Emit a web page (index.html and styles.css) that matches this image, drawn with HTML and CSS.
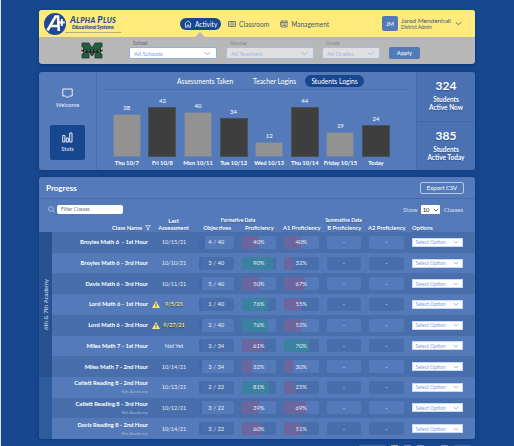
FILE: index.html
```html
<!DOCTYPE html>
<html lang="en">
<head>
<meta charset="utf-8">
<title>Alpha Plus</title>
<link rel="stylesheet" href="styles.css">
</head>
<body>
<svg class="defs" width="0" height="0"><symbol id="chev" viewBox="0 0 8 5"><path d="M1 1l3 3 3-3" fill="none" stroke="currentColor" stroke-width="1"/></symbol></svg>
<div class="page">
<header class="top">
  <div class="nav">
    <div class="brand">
      <svg class="logo" viewBox="0 0 24 24"><ellipse cx="11" cy="12" rx="11" ry="11" fill="#20489a"/><path d="M3.500 18.500L11.500 4.500l2.500 0 .8 14.500M7 14h7.500" fill="none" stroke="#fffbe6" stroke-width="2.600"/><path d="M17.800 7v7M14.800 10.500h6" stroke="#fffbe6" stroke-width="2"/></svg>
      <div class="brand-text"><div class="bt1"><b>A</b>LPHA <b>P</b>LUS</div><div class="bt2">Educational Systems</div></div>
    </div>
    <div class="tab active"><svg viewBox="0 0 8 8"><path d="M.6 4L4 .8 7.400 4M1.500 3.500v3.800h1.700V5h1.600v2.300h1.700V3.500" fill="none" stroke="currentColor" stroke-width=".7"/></svg><span>Activity</span></div>
    <div class="tab classroom"><svg viewBox="0 0 8 8"><path d="M.5 1.500h7v5h-7zM4 1.500v5M1.500 3h1.500M1.500 4.700h1.500M5 3h1.500M5 4.700h1.500" fill="none" stroke="currentColor" stroke-width=".7"/></svg><span>Classroom</span></div>
    <div class="tab management"><svg viewBox="0 0 8 8"><path d="M1 1h6.200v6H1zM1 2.500h6.200M2.500 4h3.500M2.500 5.500h3.500M0 3h1.500M0 5h1.500" fill="none" stroke="currentColor" stroke-width=".7"/></svg><span>Management</span></div>
    <div class="user"><div class="avatar">JM</div><div class="who"><div class="uname">Jarod Mendenhall</div><div class="urole">District Admin</div></div><svg class="chev"><use href="#chev"/></svg></div>
  </div>
  <div class="filters">
    <svg class="school" viewBox="0 0 22 17"><path d="M1 1h7l3 5 3-5h7v4h-1.500v7H21v4h-7v-4h1V9l-4 5-4-5v3h1v4H1v-4h1.500V5H1z" fill="#1f6240" stroke="#2b2f2d" stroke-width=".8"/><path d="M.5 8.500h21M4 9.800h14" stroke="#161c1a" stroke-width="1.600"/><path d="M3 8.800h2M6.500 8.800h2M10 8.800h2M13.500 8.800h2M17 8.800h2" stroke="#bbb" stroke-width=".7"/></svg>
    <div class="field f1"><label>School</label><div class="sel"><span>All Schools</span><svg class="chev"><use href="#chev"/></svg></div></div>
    <div class="field f2"><label>Teacher</label><div class="sel"><span>All Teachers</span><svg class="chev"><use href="#chev"/></svg></div></div>
    <div class="field f3"><label>Grade</label><div class="sel"><span>All Grades</span><svg class="chev"><use href="#chev"/></svg></div></div>
    <div class="apply">Apply</div>
  </div>
</header>
<section class="stats">
  <div class="side">
    <div class="sbtn"><svg viewBox="0 0 11 11"><path d="M.8 1h9.400v7H7.300L5.500 10 3.700 8H.8z" fill="none" stroke="#fff" stroke-width=".9"/></svg><span>Welcome</span></div>
    <div class="sbtn on"><svg viewBox="0 0 11 11"><path d="M.7 3.500h2.200v6.500H.7zM4.200 6h2.200v4H4.200zM7.700 1h2.300v9H7.700z" fill="none" stroke="#fff" stroke-width=".9"/></svg><span>Stats</span></div>
  </div>
  <div class="chart">
    <div class="ctabs"><span class="c1">Assessments Taken</span><span class="c2">Teacher Logins</span><span class="c3">Students Logins</span></div>
    <div class="bars" id="bars"></div>
  </div>
  <div class="totals">
    <div class="total"><b>324</b><span>Students<br>Active Now</span></div>
    <div class="total"><b>385</b><span>Students<br>Active Today</span></div>
  </div>
</section>
<section class="progress">
  <div class="phead"><h2>Progress</h2><div class="export">Export CSV</div></div>
  <div class="tools">
    <svg class="search" viewBox="0 0 7 7"><circle cx="3" cy="3" r="2.400" fill="none" stroke="#dce6f7" stroke-width=".6"/><path d="M4.800 4.800L6.600 6.600" stroke="#dce6f7" stroke-width=".6"/></svg>
    <div class="filter">Filter Classes</div>
    <div class="show"><span>Show</span><div class="count"><b>10</b><svg class="chev"><use href="#chev"/></svg></div><span>Classes</span></div>
  </div>
  <div class="thead">
    <div class="h-name">Class Name <svg viewBox="0 0 6 6"><path d="M.5.600h5L3.500 3v2.200L2.500 4.500V3z" fill="none" stroke="#fff" stroke-width=".6"/></svg></div>
    <div class="h-c h-last">Last<br>Assessment</div>
    <div class="h-group g1"><em>Formative Data</em><div class="g-cols"><span>Objectives</span><span>Proficiency</span><span>A1 Proficiency</span></div></div>
    <div class="h-group g2"><em>Summative Data</em><div class="g-cols"><span>B Proficiency</span><span>A2 Proficiency</span></div></div>
    <div class="h-opt">Options</div>
  </div>
  <div class="tbody">
    <div class="strips"><div class="strip s6"><span>6th &amp; 7th Academy</span></div><div class="strip s8"></div></div>
    <div class="rows" id="rows"></div>
  </div>
</section>
<div class="pager"><i class="p1"></i><i class="p2"></i><i class="p3"></i><i class="p3"></i><i class="p4"></i><i class="p5"></i></div>
</div>
<script src="app.js"></script>
</body>
</html>
```
FILE: styles.css
```css
* { box-sizing: border-box; }
body { margin: 0; width: 514px; height: 446px; overflow: hidden; background: #17478f; font-family: Lato, "Open Sans", sans-serif; font-size: 6px; line-height: 8px; color: #fff; border-left: 1px solid #dfe3e8; white-space: nowrap; }
.defs { position: absolute; }
svg { display: block; flex: none; }
.chev { width: 7px; height: 5px; }
.page { width: 436px; margin: 10px 0 0 38px; }
.top { height: 54px; border-radius: 3px; overflow: hidden; background: #b8b8b8; box-shadow: 0 1px 3px #0d2f6a; }
.nav { height: 27px; background: #ffea7c; display: flex; align-items: center; color: #3d5a77; }
.brand { width: 141px; padding-left: 5px; display: flex; align-items: center; color: #20489a; }
.logo { width: 24px; height: 24px; margin-right: 1px; }
.brand-text { border-bottom: 1px solid #b9ae72; width: 56px; height: 18px; padding-left: 5px; margin-left: -4px; font-weight: 900; font-style: italic; }
.bt1 { font-size: 7.300px; line-height: 9px; padding-left: 0; letter-spacing: .35px; }
.bt1 b { font-size: 9px; font-weight: 900; }
.bt2 { font-size: 5px; line-height: 5px; padding-left: 2px; letter-spacing: -.1px; }
.tab { display: flex; align-items: center; gap: 3px; font-size: 6.600px; }
.tab svg { width: 8px; height: 8px; }
.tab.active { width: 41px; height: 12px; padding-left: 4px; border-radius: 6px; background: #17478f; color: #fff; position: relative; }
.tab.active::after { content: ""; position: absolute; left: 15px; top: 14.500px; border: 5px solid transparent; border-top: 0; border-bottom-color: #b8b8b8; }
.classroom { margin-left: 7px; }
.management { margin-left: 11px; }
.user { margin-left: auto; width: 93px; display: flex; align-items: center; }
.avatar { width: 16px; height: 15px; border-radius: 2px; background: #5279b8; color: #fff; display: flex; align-items: center; justify-content: center; margin-right: 3px; }
.who { width: 54px; color: #375584; }
.uname { font-size: 6.400px; line-height: 7px; }
.urole { font-size: 4.900px; line-height: 6px; }
.filters { height: 27px; display: flex; align-items: flex-start; color: #585f6b; }
.school { width: 22px; height: 17px; margin: 5px 26px 0 42px; }
.field { padding-top: 3px; font-size: 5px; line-height: 7px; }
.field label { display: block; padding-left: 4px; }
.sel { height: 12px; background: #fff; border: 1px solid #8fb0e4; border-radius: 2px; color: #7ea2e2; font-size: 6px; display: flex; justify-content: space-between; align-items: center; padding: 0 5px 0 4px; }
.f1 { width: 88px; }
.f2 { width: 88px; margin-left: 9px; }
.f3 { width: 58px; margin-left: 8px; }
.f2 label, .f3 label { color: #868686; }
.f2 .sel, .f3 .sel { background: #e0e0e3; border-color: #a8bbe0; color: #a1b6df; }
.apply { width: 31px; height: 12px; margin: 10px 0 0 9px; border-radius: 2px; background: #5279b8; color: #fff; display: flex; align-items: center; justify-content: center; }
.stats { display: flex; height: 98px; margin-top: 8px; background: #547ab9; border-radius: 3px; box-shadow: 0 0 4px #103874; overflow: hidden; }
.side { width: 58px; border-right: 1px solid #456fae; padding: 9px 0 0 11px; display: flex; flex-direction: column; gap: 9px; }
.sbtn { width: 35px; height: 35px; border-radius: 2px; display: flex; flex-direction: column; align-items: center; justify-content: center; gap: 2px; font-size: 5.700px; color: #e6edf7; }
.sbtn svg { width: 11px; height: 11px; }
.sbtn.on { background: #17478f; }
.chart { width: 319px; padding-left: 7px; }
.ctabs { height: 18px; width: 304px; border-bottom: 1px solid #456fae; display: flex; align-items: center; font-size: 6.700px; }
.c1 { width: 76px; margin-left: 73px; }
.c2 { width: 46px; }
.c3 { width: 59px; height: 12px; line-height: 12px; margin-left: 6px; text-align: center; border-radius: 6px; background: #17478f; }
.bars { height: 79px; display: flex; align-items: flex-end; padding-left: 5px; }
.bar { width: 35.600px; display: flex; flex-direction: column; align-items: center; font-size: 6px; }
.bar i { width: 28px; background: #929292; outline: 1px solid #6b83a8; outline-offset: -1px; margin-top: 2px; }
.bar:nth-child(even) i { background: #3e3e3e; outline-color: #46505f; }
.bar b { height: 12px; line-height: 12px; font-size: 5.800px; font-weight: 700; }
.totals { width: 59px; background: #4a71b2; border-left: 1px solid #3f69aa; }
.total { height: 49px; padding-top: 7px; text-align: center; text-shadow: 0 1px 1px #2f5390; }
.total + .total { border-top: 1px solid #3f69aa; }
.total b { display: block; font-size: 12px; line-height: 14px; margin-bottom: 3px; }
.total span { font-size: 6.500px; line-height: 8px; display: block; font-weight: 700; }
.progress { margin-top: 7px; height: 262px; background: #547ab9; border-radius: 3px; overflow: hidden; box-shadow: 0 0 4px #103874; }
.phead { height: 22px; border-bottom: 1px solid #416cad; display: flex; justify-content: space-between; align-items: center; padding: 0 11px 0 7px; }
h2 { margin: 0; font-size: 8px; font-weight: 700; }
.export { width: 44px; height: 12px; border: 1px solid #b7c8e5; border-radius: 2px; display: flex; align-items: center; justify-content: center; }
.tools { height: 16px; padding: 5px 12px 0 9px; display: flex; align-items: center; }
.search { width: 7px; height: 7px; }
.filter { width: 66px; height: 9px; line-height: 9px; background: #fff; border-radius: 2px; margin-left: 2px; padding-left: 4px; color: #70747b; font-size: 5px; }
.show { margin-left: auto; display: flex; align-items: center; gap: 3.500px; height: 9px; font-size: 6px; color: #d7e1f2; }
.count { width: 19px; height: 9px; background: #fff; color: #222; display: flex; align-items: center; justify-content: space-around; border-radius: 1px; }
.count b { font-weight: 400; }
.count .chev { width: 6px; height: 4px; }
.thead { height: 17px; display: flex; align-items: flex-end; font-size: 5.800px; font-weight: 700; line-height: 7px; padding-bottom: 1px; text-shadow: 0 1px 1px #355c9b; }
.h-name { width: 112px; display: flex; justify-content: flex-end; align-items: center; gap: 3px; }
.h-name svg { width: 6px; height: 6px; }
.h-last { width: 45px; text-align: center; }
.g-cols { display: flex; }
.g-cols span { width: 42.500px; text-align: center; }
.h-group em { display: block; font-style: normal; font-size: 5px; text-align: center; }
.g1 em { width: 84px; }
.g2 em { width: 41px; }
.g1 { width: 127px; }
.h-opt { margin-left: 4px; }
.tbody { display: flex; height: 207px; }
.strip { width: 13px; display: flex; align-items: center; justify-content: center; background: #28528f; color: #d7e1f2; }
.s6 { height: 145px; }
.s8 { height: 62px; background: #2e5b9e; }
.strip span { writing-mode: vertical-rl; transform: rotate(180deg); }
.rows { flex: 1; display: grid; grid-template-rows: repeat(10, 1fr); }
.row { display: grid; grid-template-columns: 96px 9px 34px 8px repeat(5, 42.500px) 51px; align-items: center; background: #547ab9; }
.row:nth-child(odd) { background: #486fab; }
.name { text-align: right; font-weight: 700; font-size: 5.800px; line-height: 8px; }
.name small { display: block; font-size: 4.600px; line-height: 7px; font-weight: 400; color: #a4b7d7; margin-top: 1px; }
.warn { width: 8px; height: 7px; margin-left: 4px; }
.date { text-align: center; font-size: 5.600px; color: #e4ebf6; }
.late { color: #f5e47d; font-weight: 700; text-shadow: 0 1px 1px #333c55; }
.meter { height: 13px; width: 34.500px; border-radius: 2px; overflow: hidden; background: #547ab9; display: grid; align-items: center; text-align: center; color: #e4ebf6; font-size: 5.900px; }
.row:nth-child(even) .meter { background: #486fab; }
.meter > * { grid-area: 1 / 1; }
.meter i { height: 13px; background: #6c669f; }
.meter i.good { background: #3b82a0; }
.meter i.obj { background: #426aad; }
.opt { height: 9px; background: #fff; border: 1px solid #cad8f2; color: #7ea2e2; font-size: 5px; display: flex; align-items: center; justify-content: space-between; padding: 0 3px; }
.opt .chev { width: 6px; height: 4px; }
.pager { display: flex; gap: 6px; margin: 6px 0 0 320px; }
.pager i { height: 3px; width: 7px; background: #6f8fc0; }
.pager .p1 { width: 26px; background: #3c66a8; }
.pager .p2 { background: #a5a578; }
.pager .p4 { margin-left: 11px; }
.pager .p5 { width: 16px; background: #3c66a8; }
```
FILE: app.js
```
const bars = [
  [38, 43, "Thu 10/7"], [42, 50, "Fri 10/8"], [40, 45, "Mon 10/11"], [34, 39, "Tue 10/12"],
  [12, 15, "Wed 10/13"], [44, 50, "Thu 10/14"], [19, 25, "Friday 10/15"], [24, 32, "Today"]
];
document.getElementById("bars").innerHTML = bars.map(([n, h, d]) =>
  `<div class="bar"><span>${n}</span><i style="height:${h}px"></i><b>${d}</b></div>`).join("");

const rows = [
  ["Broyles Math 6&nbsp; - 1st Hour", "10/15/21", "4 / 40", 17, 40, 40, 50, 50],
  ["Broyles Math 6 - 3rd Hour", "10/10/21", "3 / 40", 9, 90, 32, 90, 27],
  ["Davis Math 6 - 3rd Hour", "10/11/21", "5 / 40", 9, 50, 67, 50, 60],
  ["Lord Math 6 - 1st Hour", "9/5/21", "1 / 40", 9, 76, 55, 76, 50],
  ["Lord Math 6 - 3rd Hour", "9/27/21", "2 / 40", 9, 76, 52, 76, 50],
  ["Miles Math 7 - 1st Hour", "Not Yet", "3 / 34", 9, 61, 70, 63, 72],
  ["Miles Math 7 - 2nd Hour", "10/14/21", "3 / 34", 9, 32, 30, 31, 27],
  ["Catlett Reading 8 - 2nd Hour", "10/13/21", "2 / 22", 9, 81, 25, 81, 31],
  ["Catlett Reading 8 - 3rd Hour", "10/12/21", "3 / 22", 9, 39, 69, 50, 65],
  ["Davis Reading 8 - 2nd Hour", "10/14/21", "3 / 22", 9, 60, 51, 58, 53]
];
const meter = (text, width, kind) =>
  `<div class="meter">${width ? `<i class="${kind}" style="width:${width}%"></i>` : ""}<span>${text}</span></div>`;
const grade = (value, width) => meter(value + "%", width, value >= 70 ? "good" : "low");
const warning = `<svg class="warn" viewBox="0 0 8 7"><path d="M4 0l4 7H0z" fill="#ffe875"/><path d="M4 2.300v2.400M4 5.300v.9" stroke="#333" stroke-width=".9"/></svg>`;
document.getElementById("rows").innerHTML = rows.map(([name, date, obj, ow, p, a, pw, aw], i) => {
  const late = i === 3 || i === 4;
  return `<div class="row"><div class="name">${name}${i > 6 ? "<small>8th Academy</small>" : ""}</div>
  <div>${late ? warning : ""}</div><div class="date${late ? " late" : ""}">${date}</div><div></div>
  ${meter(obj, ow, "obj")}${grade(p, pw)}${grade(a, aw)}${meter("-")}${meter("-")}
  <div class="opt"><span>Select Option</span><svg class="chev"><use href="#chev"/></svg></div></div>`;
}).join("");
```
